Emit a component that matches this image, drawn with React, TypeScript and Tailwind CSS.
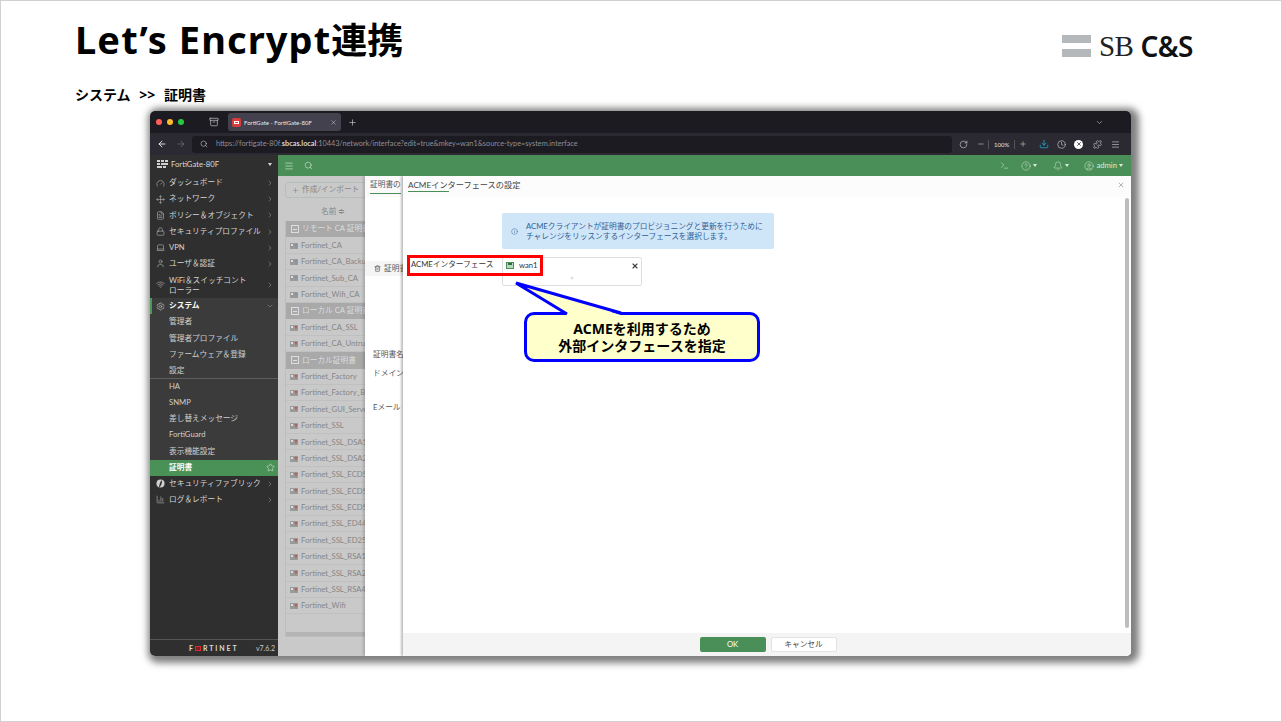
import React from 'react';
import {
  Archive, ArrowLeft, ArrowRight, BarChart3, Bell, ChevronDown, ChevronRight, CircleHelp, CircleUser, Clock, Download,
  Gauge, Info, Laptop, Lock, Menu, Minus, Move, Plus, Puzzle, RotateCw, Search, Settings, Star, Terminal,
  Trash2, User, Wifi, X, FileText,
} from 'lucide-react';

const FabricIcon = ({ className }: { size?: number; strokeWidth?: number; className?: string }) => (
  <svg width="9" height="9" viewBox="0 0 10 10" className={className}>
    <circle cx="5" cy="5" r="4.5" fill="#d0d0d0" />
    <path d="M6.5 1C4 3 4 7 3 9.3C6 8 7 4 6.5 1Z" fill="#2f2f2f" />
  </svg>
);

const navTop = [
  { label: 'ダッシュボード', icon: Gauge },
  { label: 'ネットワーク', icon: Move },
  { label: 'ポリシー＆オブジェクト', icon: FileText },
  { label: 'セキュリティプロファイル', icon: Lock },
  { label: 'VPN', icon: Laptop },
  { label: 'ユーザ＆認証', icon: User },
];

const subA = ['管理者', '管理者プロファイル', 'ファームウェア＆登録', '設定'];
const subB = ['HA', 'SNMP', '差し替えメッセージ', 'FortiGuard', '表示機能設定'];

const rows: { label: string; group?: boolean; ca?: boolean }[] = [
  { label: 'リモート CA 証明書', group: true },
  { label: 'Fortinet_CA', ca: true },
  { label: 'Fortinet_CA_Backup', ca: true },
  { label: 'Fortinet_Sub_CA', ca: true },
  { label: 'Fortinet_Wifi_CA', ca: true },
  { label: 'ローカル CA 証明書', group: true },
  { label: 'Fortinet_CA_SSL' },
  { label: 'Fortinet_CA_Untrusted' },
  { label: 'ローカル証明書', group: true },
  { label: 'Fortinet_Factory' },
  { label: 'Fortinet_Factory_Backup' },
  { label: 'Fortinet_GUI_Server' },
  { label: 'Fortinet_SSL' },
  { label: 'Fortinet_SSL_DSA1024' },
  { label: 'Fortinet_SSL_DSA2048' },
  { label: 'Fortinet_SSL_ECDSA256' },
  { label: 'Fortinet_SSL_ECDSA384' },
  { label: 'Fortinet_SSL_ECDSA521' },
  { label: 'Fortinet_SSL_ED448' },
  { label: 'Fortinet_SSL_ED25519' },
  { label: 'Fortinet_SSL_RSA1024' },
  { label: 'Fortinet_SSL_RSA2048' },
  { label: 'Fortinet_SSL_RSA4096' },
  { label: 'Fortinet_Wifi' },
];

const NavRow = ({ label, icon: Icon }: { label: string; icon: React.ElementType }) => (
  <div className="flex h-[16.17px] items-center pl-[6px] pr-[4px] text-[#d4d4d4]">
    <Icon size={9} strokeWidth={1.5} className="mr-[4px] shrink-0 text-[#bdbdbd]" />
    <span className="flex-1 whitespace-nowrap">{label}</span>
    <ChevronRight size={8} strokeWidth={1.5} className="text-[#a0a0a0]" />
  </div>
);

const SubRow = ({ label }: { label: string }) => (
  <div className="flex h-[16.17px] items-center pl-[19px] whitespace-nowrap text-[#cfcfcf]">{label}</div>
);

const CertIcon = ({ ca }: { ca?: boolean }) => (
  <svg width="8" height="6" viewBox="0 0 8 6" className="mr-[3px] shrink-0">
    <rect width="8" height="6" fill="#9a9a9a" />
    <rect x="1" y="1" width="2" height="2" fill="#dddddd" />
    <path d="M4.5 1H7.5L6 5Z" fill={ca ? '#7f93a8' : '#b06060'} />
  </svg>
);

export default function App() {
  return (
    <div className="flex h-[722px] w-[1282px] flex-col overflow-hidden border border-[#d0d0d0] bg-white font-['Noto_Sans','Noto_Sans_CJK_JP',sans-serif] text-black">
      <div className="flex h-[80px] shrink-0 items-start justify-between pl-[74px] pr-[88px]">
        <h1 className="mt-[11px] text-[38px] leading-[54px] font-bold tracking-[1.1px] whitespace-nowrap">
          Let’s Encrypt<span className="text-[36px] tracking-normal">連携</span>
        </h1>
        <div className="mt-[33px] flex items-center">
          <div className="mr-[8px] flex w-[29px] flex-col gap-[6px]">
            <div className="h-[8px] bg-[#b5b8bb]" />
            <div className="h-[8px] bg-[#b5b8bb]" />
          </div>
          <span className="font-['Liberation_Serif',serif] text-[29px] leading-[24px] tracking-[-0.5px] text-[#222]">SB</span>
          <span className="ml-[7px] text-[28px] leading-[24px] font-semibold tracking-[-0.5px] text-[#111]">C&amp;S</span>
        </div>
      </div>
      <div className="ml-[74px] h-[30px] shrink-0 text-[14px] leading-[28px] font-bold [word-spacing:5px] whitespace-nowrap">システム &gt;&gt; 証明書</div>

      <div className="ml-[149px] flex h-[545px] w-[981px] shrink-0 flex-col overflow-hidden rounded-[5px] font-['Lato','Noto_Sans_CJK_JP',sans-serif] text-[7.7px] shadow-[3px_2px_7px_5px_rgba(0,0,0,0.5)]">
        {/* browser tabs */}
        <div className="flex h-[22px] shrink-0 items-center bg-[#1c1b22] text-[#e8e8e8]">
          <div className="ml-[6px] flex gap-[5px]">
            <span className="h-[6px] w-[6px] rounded-full bg-[#ff5f57]" />
            <span className="h-[6px] w-[6px] rounded-full bg-[#febc2e]" />
            <span className="h-[6px] w-[6px] rounded-full bg-[#28c840]" />
          </div>
          <Archive size={10} strokeWidth={1.5} className="ml-[25px] text-[#d8d8d8]" />
          <div className="ml-[9px] flex h-[18px] w-[113px] items-center rounded-[3px] bg-[#42414d] px-[4px] text-[6px]">
            <span className="mr-[3px] flex h-[9px] w-[9px] items-center justify-center rounded-[2px] bg-[#d93a3a]">
              <span className="h-[3px] w-[5px] border border-white" />
            </span>
            <span className="flex-1 whitespace-nowrap">FortiGate - FortiGate-80F</span>
            <X size={7} strokeWidth={1.5} />
          </div>
          <Plus size={9} strokeWidth={1.5} className="ml-[7px]" />
          <ChevronDown size={9} strokeWidth={1.5} className="ml-auto mr-[27px] text-[#cfcfcf]" />
        </div>
        {/* browser toolbar */}
        <div className="flex h-[22px] shrink-0 items-center bg-[#2b2a33] text-[#e0e0e0]">
          <ArrowLeft size={10} strokeWidth={2} className="ml-[7px] text-white" />
          <ArrowRight size={10} strokeWidth={1.5} className="ml-[9px] text-[#77767e]" />
          <div className="ml-[6px] flex h-[17px] w-[760px] items-center rounded-[3px] bg-[#1c1b22] pl-[8px] text-[7.3px] text-[#8f8e96]">
            <Search size={8} strokeWidth={1.5} className="mr-[8px] text-[#e0e0e0]" />
            <span className="whitespace-nowrap">
              https://fortigate-80f.<span className="font-bold text-[#d8d8d8]">sbcas.local</span>:10443/network/interface?edit=true&amp;mkey=wan1&amp;source-type=system.interface
            </span>
          </div>
          <RotateCw size={9} strokeWidth={1.5} className="ml-[7px]" />
          <Minus size={8} strokeWidth={1.5} className="ml-[9px]" />
          <span className="ml-[3px] h-[9px] border-l border-[#55545c]" />
          <span className="ml-[5px] text-[6px]">100%</span>
          <span className="ml-[5px] h-[9px] border-l border-[#55545c]" />
          <Plus size={8} strokeWidth={1.5} className="ml-[4px]" />
          <Download size={10} strokeWidth={2} className="ml-[12px] text-[#1aa3c8]" />
          <Clock size={9} strokeWidth={1.5} className="ml-[8px]" />
          <span className="ml-[8px] flex h-[9px] w-[9px] items-center justify-center rounded-full bg-white">
            <X size={6} strokeWidth={3} className="text-[#2b2a33]" />
          </span>
          <Puzzle size={9} strokeWidth={1.5} className="ml-[10px]" />
          <Menu size={9} strokeWidth={1.5} className="ml-[9px]" />
        </div>

        <div className="flex min-h-0 flex-1">
          {/* sidebar */}
          <div className="flex w-[128px] shrink-0 flex-col bg-[#2f2f2f]">
            <div className="flex h-[20px] shrink-0 items-center pb-[1px] pl-[7px] pr-[6px] text-[#d8d8d8]">
              <svg width="11" height="9" viewBox="0 0 11 9" className="mr-[3px]" fill="#d0d0d0">
                <rect width="3" height="2" /><rect x="4" width="3" height="2" /><rect x="8" width="3" height="2" />
                <rect y="3" width="3" height="2" /><rect x="4" y="3" width="7" height="2" />
                <rect y="6" width="5" height="2" /><rect x="6" y="6" width="3" height="2" />
              </svg>
              <span className="flex-1">FortiGate-80F</span>
              <span className="border-x-[2.5px] border-t-[3px] border-x-transparent border-t-[#d8d8d8]" />
            </div>
            {navTop.map((n) => (
              <NavRow key={n.label} {...n} />
            ))}
            <div className="flex h-[26px] items-center pl-[6px] pr-[4px] text-[#d4d4d4]">
              <Wifi size={9} strokeWidth={1.5} className="mr-[4px] shrink-0 text-[#bdbdbd]" />
              <span className="flex-1 leading-[10px]">WiFi＆スイッチコント<br />ローラー</span>
              <ChevronRight size={8} strokeWidth={1.5} className="text-[#a0a0a0]" />
            </div>
            <div className="flex h-[16.17px] items-center border-l-2 border-[#4a9a5a] bg-[#3b3b3b] pl-[4px] pr-[4px] font-bold text-white">
              <Settings size={9} strokeWidth={1.5} className="mr-[4px] shrink-0 text-[#cfcfcf]" />
              <span className="flex-1">システム</span>
              <ChevronDown size={8} strokeWidth={1.5} className="text-[#a0a0a0]" />
            </div>
            <div className="bg-[#3b3b3b]">
              {subA.map((s) => (
                <SubRow key={s} label={s} />
              ))}
              <div className="shadow-[0_-1px_0_#5e5e5e]">
                {subB.map((s) => (
                  <SubRow key={s} label={s} />
                ))}
              </div>
              <div className="flex h-[16.17px] items-center bg-[#4a9158] pl-[19px] pr-[3px] font-bold text-white">
                <span className="flex-1">証明書</span>
                <Star size={9} strokeWidth={1.2} />
              </div>
            </div>
            <NavRow label="セキュリティファブリック" icon={FabricIcon} />
            <NavRow label="ログ＆レポート" icon={BarChart3} />
            <div className="mt-auto flex h-[17px] items-center border-t border-[#555] pr-[3px]">
              <span className="ml-[39px] flex items-center text-[7px] font-bold tracking-[1.9px] text-[#d8d8d8]">
                F<span className="mr-[2px] h-[5px] w-[6px] border border-[#d92c2c] bg-[#7a1f1f]" />RTINET
              </span>
              <span className="ml-auto text-[7px] text-[#c8c8c8]">v7.6.2</span>
            </div>
          </div>

          <div className="flex min-w-0 flex-1 flex-col">
            {/* fortios header */}
            <div className="flex h-[21px] shrink-0 items-center bg-[#4a8f57] pl-[6px] pr-[8px] text-[#dcebdf]">
              <Menu size={10} strokeWidth={1.5} />
              <Search size={9} strokeWidth={1.5} className="ml-[10px]" />
              <Terminal size={9} strokeWidth={1.5} className="ml-auto" />
              <CircleHelp size={10} strokeWidth={1.2} className="ml-[12px]" />
              <span className="ml-[2px] border-x-[2px] border-t-[3px] border-x-transparent border-t-[#dcebdf]" />
              <Bell size={10} strokeWidth={1.2} className="ml-[16px]" />
              <span className="ml-[2px] border-x-[2px] border-t-[3px] border-x-transparent border-t-[#dcebdf]" />
              <CircleUser size={10} strokeWidth={1.2} className="ml-[15px]" />
              <span className="ml-[2px]">admin</span>
              <span className="ml-[2px] border-x-[2px] border-t-[3px] border-x-transparent border-t-[#dcebdf]" />
            </div>

            <div className="relative min-h-0 flex-1 overflow-hidden bg-[#c9c9c9]">
              {/* dimmed certificate list */}
              <div className="pl-[7px] text-[#868686]">
                <div className="flex h-[45px] items-start pt-[6px]">
                  <div className="flex h-[16px] w-[90px] items-center rounded-[3px] border border-[#b5bfb7] px-[6px]">
                    <Plus size={7} className="mr-[3px]" />
                    <span className="whitespace-nowrap">作成/インポート</span>
                  </div>
                </div>
                <div className="border-x border-b border-[#bdbdbd]">
                  {rows.map((r) =>
                    r.group ? (
                      <div key={r.label} className="flex h-[16.4px] items-center bg-[#a9a9a9] pl-[5px] whitespace-nowrap text-[#dddddd]">
                        <span className="mr-[3px] flex h-[8px] w-[8px] items-center justify-center border border-[#dddddd]">
                          <span className="h-px w-[4px] bg-[#dddddd]" />
                        </span>
                        {r.label}
                      </div>
                    ) : (
                      <div key={r.label} className="flex h-[16.4px] items-center border-b border-[#c0c0c0] pl-[4px] pt-[1px] whitespace-nowrap">
                        <CertIcon ca={r.ca} />
                        {r.label}
                      </div>
                    ),
                  )}
                  <div className="mt-[18px] h-[4px] bg-[#b4b4b4]" />
                </div>
              </div>
              <div className="absolute left-[43px] top-[30px] text-[#868686]">名前 ≑</div>

              {/* first slide-in */}
              <div className="absolute inset-y-0 left-[87px] right-0 flex flex-col bg-white shadow-[-2px_0_2px_rgba(0,0,0,0.15)]">
                <div className="flex h-[21px] shrink-0 items-start bg-[#fafafa] pl-[5px] pt-[3px] text-[#555]">
                  <span className="whitespace-nowrap border-b border-[#4a8f57] pb-[2px]">証明書の</span>
                </div>
                <div className="mt-[64px] flex h-[15px] items-center bg-[#f5f5f5] pl-[9px] text-[#555]">
                  <Trash2 size={7} className="mr-[3px]" />
                  <span className="whitespace-nowrap">証明書</span>
                </div>
                <div className="mt-[73px] pl-[8px] whitespace-nowrap text-[#555]">証明書名</div>
                <div className="mt-[7px] pl-[8px] whitespace-nowrap text-[#555]">ドメイン</div>
                <div className="mt-[23px] pl-[8px] whitespace-nowrap text-[#555]">Eメール</div>
              </div>

              {/* second slide-in */}
              <div className="absolute inset-y-0 left-[125px] right-0 flex flex-col bg-white text-[#333] shadow-[-2px_0_2px_rgba(0,0,0,0.25)]">
                <div className="flex h-[21px] shrink-0 items-start justify-between bg-[#fcfcfc] pl-[5px] pr-[6px] pt-[3px] text-[8.2px] text-[#444]">
                  <span className="relative whitespace-nowrap">
                    ACMEインターフェースの設定
                    <span className="absolute left-0 top-[12px] h-px w-[41px] bg-[#4a8f57]" />
                  </span>
                  <X size={8} strokeWidth={1.2} className="mt-[2px]" />
                </div>
                <div className="relative min-h-0 flex-1 pl-[99px] pt-[16px]">
                  <div className="flex h-[36px] w-[272px] items-center rounded-[2px] bg-[#cfe5f8] pl-[9px] text-[#2f5f96]">
                    <Info size={7} strokeWidth={1.5} className="mr-[8px] shrink-0" />
                    <span className="leading-[10.5px] whitespace-nowrap">
                      ACMEクライアントが証明書のプロビジョニングと更新を行うために<br />
                      チャレンジをリッスンするインターフェースを選択します。
                    </span>
                  </div>
                  <div className="ml-[-99px] mt-[8px] flex">
                    <div className="w-[99px] pl-[8px] pt-[1px] whitespace-nowrap leading-[12px]">ACMEインターフェース</div>
                    <div className="relative h-[29px] w-[140px] rounded-[2px] border border-[#dedede]">
                      <div className="flex items-center pl-[3px] pt-[1px] leading-[12px]">
                        <span className="mr-[5px] flex h-[7px] w-[8px] items-start justify-center border border-[#4a8f57] bg-[#b7d8bd]">
                          <span className="h-[2px] w-[4px] bg-[#2f6f3d]" />
                        </span>
                        wan1
                      </div>
                      <X size={8} strokeWidth={3.5} className="absolute right-[2px] top-[4px] text-[#444]" />
                      <Plus size={4} strokeWidth={2} className="absolute left-[67px] top-[18px] text-[#999]" />
                    </div>
                  </div>
                  {/* scrollbar */}
                  <div className="absolute bottom-[5px] right-[2px] top-[1px] w-[4px] rounded-full bg-[#bdbdbd]" />
                </div>
                <div className="flex h-[23px] shrink-0 items-center justify-center gap-[5px] bg-[#f4f4f4] pl-[2px]">
                  <div className="flex h-[15px] w-[66px] items-center justify-center rounded-[2px] bg-[#4a8f57] text-white">OK</div>
                  <div className="flex h-[15px] w-[66px] items-center justify-center rounded-[2px] border border-[#e2e2e2] bg-white text-[#444]">キャンセル</div>
                </div>

                {/* annotation over the screen capture */}
                <div className="absolute left-[4px] top-[79px] h-[21px] w-[136px] border-[3px] border-[#ff0000]" />
                <div className="absolute left-[121px] top-[136px] flex h-[50px] w-[236px] items-center justify-center rounded-[10px] border-[3px] border-[#0000ff] bg-[#ffffcc] text-center font-['Noto_Sans','Noto_Sans_CJK_JP',sans-serif] text-[14px] leading-[17px] font-bold text-black">
                  ACMEを利用するため<br />外部インタフェースを指定
                </div>
                <svg width="120" height="40" viewBox="0 0 120 40" className="absolute left-[108px] top-[105px]">
                  <polygon points="5,2 56,34 110,34" fill="#ffffcc" />
                  <polyline points="56,33 5,2 110,32" fill="none" stroke="#0000ff" strokeWidth="3" />
                </svg>
              </div>
            </div>
          </div>
        </div>
      </div>
    </div>
  );
}
